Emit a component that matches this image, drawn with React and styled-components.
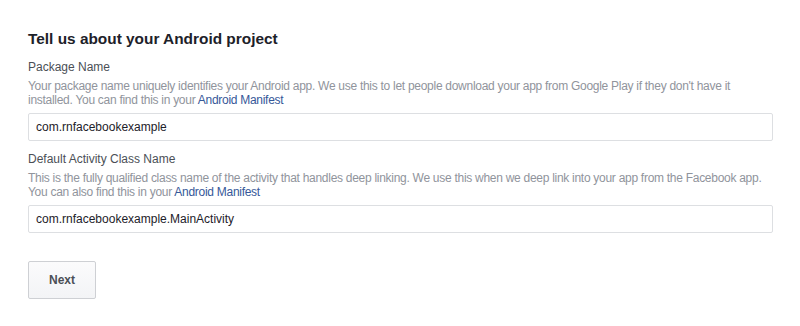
import React from "react";
import styled, { createGlobalStyle } from "styled-components";

const Global = createGlobalStyle`
  html, body { margin: 0; padding: 0; background: #fff; }
  body { font-family: "Liberation Sans", Helvetica, Arial, sans-serif; -webkit-font-smoothing: antialiased; }
`;

const Page = styled.div`
  width: 800px;
  height: 326px;
  box-sizing: border-box;
  padding: 29px 28px 0 28px;
  display: flex;
  flex-direction: column;
`;

const Heading = styled.h2`
  margin: 0 0 10px 0;
  font-size: 15.4px;
  line-height: 20px;
  font-weight: bold;
  color: #1d2129;
`;

const Field = styled.div`
  display: flex;
  flex-direction: column;
  width: 745px;
  margin-bottom: ${(p) => p.$gap || 0}px;
`;

const Label = styled.label`
  font-size: 12px;
  line-height: 16px;
  color: #4b4f56;
  margin-bottom: 4px;
`;

const Help = styled.p`
  margin: 0 0 6px 0;
  font-size: 12px;
  line-height: 14px;
  letter-spacing: -0.28px;
  color: #90949c;
`;

const Link = styled.a`
  color: #365899;
  text-decoration: none;
`;

const Input = styled.input`
  box-sizing: border-box;
  width: 745px;
  height: 28px;
  border: 1px solid #dddfe2;
  border-radius: 2px;
  padding: 0 7px;
  font-family: inherit;
  font-size: 12px;
  color: #1d2129;
  outline: none;
  background: #fff;
`;

const Button = styled.button`
  box-sizing: border-box;
  align-self: flex-start;
  margin-top: 28px;
  width: 68px;
  height: 38px;
  border: 1px solid #ced0d4;
  border-radius: 2px;
  background: linear-gradient(#fbfbfc, #f3f4f6);
  font-family: inherit;
  font-size: 12px;
  font-weight: bold;
  color: #4b4f56;
  cursor: pointer;
`;

export default function App() {
  return (
    <>
      <Global />
      <Page>
        <Heading>Tell us about your Android project</Heading>
        <Field $gap={10}>
          <Label>Package Name</Label>
          <Help>
            Your package name uniquely identifies your Android app. We use this to let people download your app from Google Play if they don't have it installed. You can find this in your <Link href="#">Android Manifest</Link>
          </Help>
          <Input defaultValue="com.rnfacebookexample" readOnly />
        </Field>
        <Field>
          <Label>Default Activity Class Name</Label>
          <Help>
            This is the fully qualified class name of the activity that handles deep linking. We use this when we deep link into your app from the Facebook app. You can also find this in your <Link href="#">Android Manifest</Link>
          </Help>
          <Input defaultValue="com.rnfacebookexample.MainActivity" readOnly />
        </Field>
        <Button>Next</Button>
      </Page>
    </>
  );
}
